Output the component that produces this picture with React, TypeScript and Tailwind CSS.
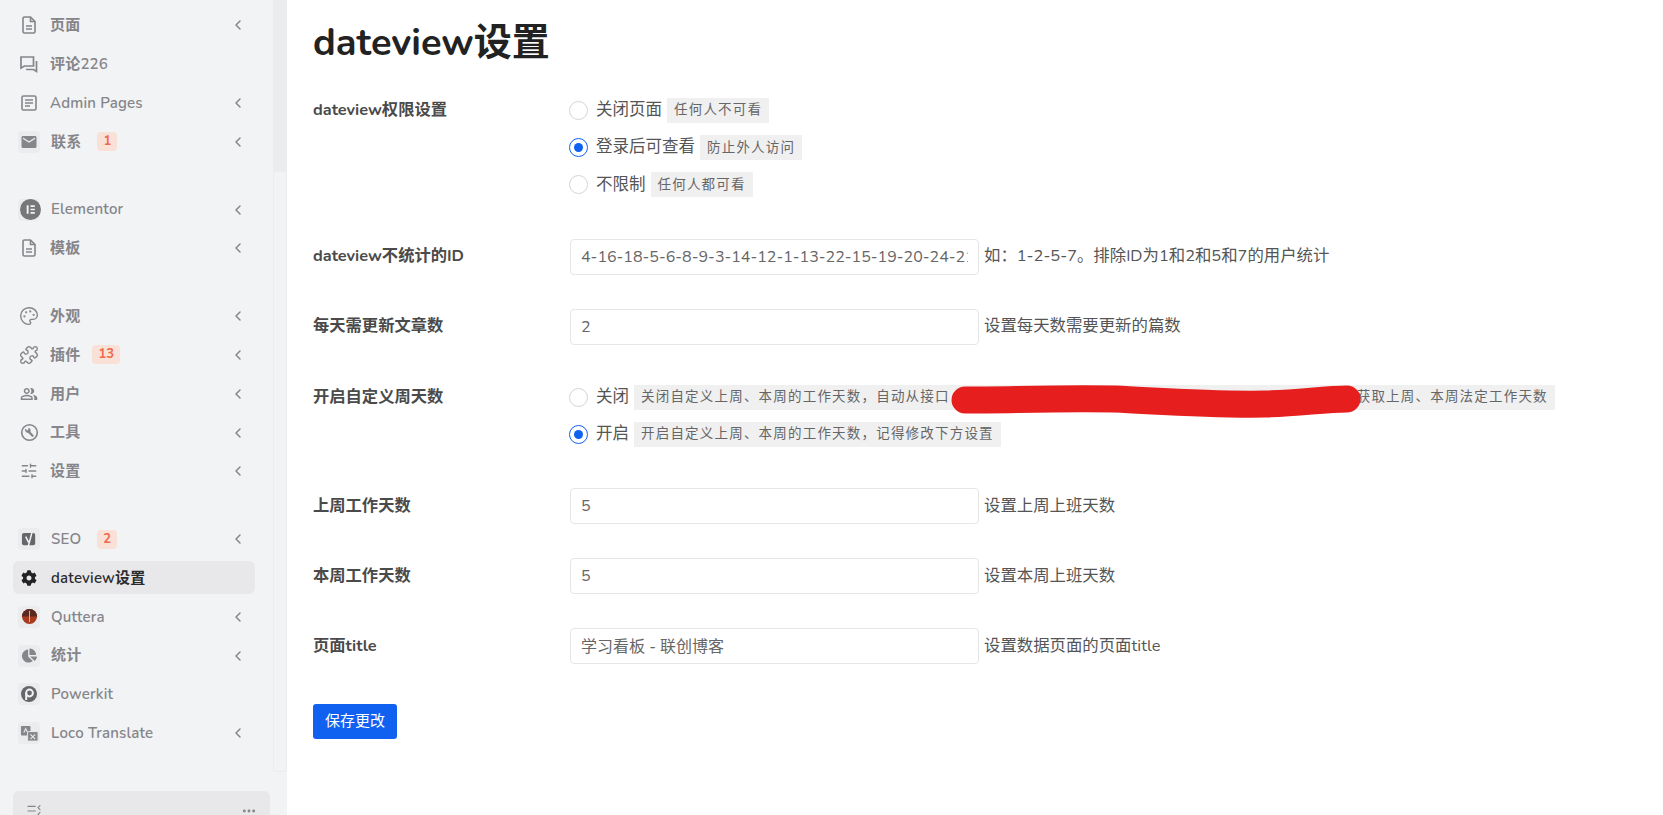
import { FC, ReactNode } from "react";
import {
  ChevronLeft,
  Ellipsis,
  ListCollapse,
  Palette,
  Puzzle,
  SlidersHorizontal,
} from "lucide-react";
import { FaChartPie, FaCog } from "react-icons/fa";
import { MdEmail, MdOutlinePeopleAlt } from "react-icons/md";

const sans = "font-['Nunito','Lato','Noto_Sans_CJK_SC',sans-serif]";

const FileIcon = () => (
  <svg viewBox="0 0 20 20" className="h-5 w-5" fill="none" stroke="currentColor" strokeWidth="1.6">
    <path d="M4 3.5A1.5 1.5 0 0 1 5.5 2H11.5L16 6.5V16.5A1.5 1.5 0 0 1 14.5 18H5.5A1.5 1.5 0 0 1 4 16.5z" />
    <path d="M11.5 2v4.5H16M7 11h6M7 14h6" />
  </svg>
);

const CommentsIcon = () => (
  <svg viewBox="0 0 20 20" className="h-5 w-5" fill="none" stroke="currentColor" strokeWidth="1.7">
    <path d="M2 3h12.5v9H5.5L2 14z" />
    <path d="M17.5 7v10.5L14.5 15.5H7" />
  </svg>
);

const PagesIcon = () => (
  <svg viewBox="0 0 20 20" className="h-5 w-5" fill="none" stroke="currentColor" strokeWidth="1.6">
    <rect x="3" y="3" width="14" height="14" rx="1.5" />
    <path d="M6 7h8M6 10h8M6 13h5" />
  </svg>
);

const ToolsIcon = () => (
  <svg viewBox="0 0 20 20" className="h-[19px] w-[19px]" fill="none" stroke="currentColor">
    <circle cx="10" cy="10" r="8.2" strokeWidth="1.7" />
    <path d="M9 9l4.2 4.4" strokeWidth="2.4" strokeLinecap="round" />
    <path d="M5.8 6.2a3 3 0 0 0 4.4 3.6a3 3 0 0 0-1-4.6l-.2 2.4l-1.8.4z" fill="currentColor" strokeWidth="0.6" />
  </svg>
);

const ElementorIcon = () => (
  <svg viewBox="0 0 22 22" className="ml-[3px] h-[21px] w-[21px] shrink-0">
    <circle cx="11" cy="11" r="11" fill="#77777a" />
    <path d="M7 6.5h2v9H7zM11 6.5h4.5v1.8H11zM11 10.1h4.5v1.8H11zM11 13.7h4.5v1.8H11z" fill="#f2f3f5" />
  </svg>
);

const YoastIcon = () => (
  <svg viewBox="0 0 18 18" className="h-[17px] w-[17px]">
    <rect x="1" y="2" width="14" height="13" rx="2" fill="#66666a" />
    <path d="M5 6l3 6M11.5 2L7.5 17" stroke="#f2f3f5" strokeWidth="1.6" fill="none" />
  </svg>
);

const QutteraIcon = () => (
  <svg viewBox="0 0 18 18" className="h-[17px] w-[17px]">
    <circle cx="9" cy="9" r="8" fill="#a83a20" />
    <path d="M1 9a8 8 0 0 1 16 0z" fill="#5a2a20" />
    <path d="M9 3v12" stroke="#e8b090" strokeWidth="1" />
  </svg>
);

const PowerkitIcon = () => (
  <svg viewBox="0 0 18 18" className="h-[18px] w-[18px]">
    <circle cx="9" cy="9" r="8" fill="#66666a" />
    <circle cx="9.5" cy="8" r="3.4" fill="none" stroke="#f2f3f5" strokeWidth="2" />
    <path d="M6.2 8v7" stroke="#f2f3f5" strokeWidth="2" />
  </svg>
);

const LocoIcon = () => (
  <svg viewBox="0 0 20 20" className="h-[19px] w-[19px]">
    <rect x="1" y="2" width="10" height="10" rx="1" fill="#85858a" />
    <rect x="8" y="8" width="11" height="10" rx="1" fill="#85858a" stroke="#ebecee" />
    <path d="M4 9l2-4 2 4M11 11l5 5M16 11l-5 5" stroke="#ebecee" strokeWidth="1.1" fill="none" />
  </svg>
);

type MenuItem = {
  label: string;
  icon: ReactNode;
  tile?: boolean;
  badge?: string;
  arrow?: boolean;
  active?: boolean;
};

const menuGroups: MenuItem[][] = [
  [
    { label: "页面", icon: <FileIcon />, arrow: true },
    { label: "评论226", icon: <CommentsIcon /> },
    { label: "Admin Pages", icon: <PagesIcon />, arrow: true },
    { label: "联系", icon: <MdEmail className="h-[18px] w-[18px]" />, tile: true, badge: "1", arrow: true },
  ],
  [
    { label: "Elementor", icon: <ElementorIcon />, tile: true, arrow: true },
    { label: "模板", icon: <FileIcon />, arrow: true },
  ],
  [
    { label: "外观", icon: <Palette className="h-5 w-5" strokeWidth={1.7} />, arrow: true },
    { label: "插件", icon: <Puzzle className="h-5 w-5" strokeWidth={1.7} />, badge: "13", arrow: true },
    { label: "用户", icon: <MdOutlinePeopleAlt className="h-[18px] w-[18px]" />, arrow: true },
    { label: "工具", icon: <ToolsIcon />, arrow: true },
    { label: "设置", icon: <SlidersHorizontal className="h-[18px] w-[18px]" strokeWidth={1.7} />, arrow: true },
  ],
  [
    { label: "SEO", icon: <YoastIcon />, tile: true, badge: "2", arrow: true },
    { label: "dateview设置", icon: <FaCog className="h-4 w-4" />, tile: true, active: true },
    { label: "Quttera", icon: <QutteraIcon />, tile: true, arrow: true },
    { label: "统计", icon: <FaChartPie className="h-[15px] w-[15px]" />, tile: true, arrow: true },
    { label: "Powerkit", icon: <PowerkitIcon />, tile: true },
    { label: "Loco Translate", icon: <LocoIcon />, tile: true, arrow: true },
  ],
];

const MenuRow: FC<{ item: MenuItem }> = ({ item }) => (
  <div className="flex h-[38.8px] items-center">
    <div
      className={`flex h-[33px] w-[242px] items-center rounded-md pl-[5px] pr-[9px] ${
        item.active ? "bg-[#e8e8ea] text-[#2b2b2e]" : "text-[#85858a]"
      }`}
    >
      <span
        className={`flex h-[22px] w-[22px] shrink-0 items-center justify-center rounded ${
          item.tile ? "bg-[#ebecee]" : ""
        } ${item.active ? "bg-transparent text-[#222]" : ""}`}
      >
        {item.icon}
      </span>
      <span
        className={`text-[15px] font-semibold tracking-[0.2px] ${item.tile ? "ml-[11px]" : "ml-[10px]"}`}
      >
        {item.label}
      </span>
      {item.badge && (
        <span
          className={`rounded bg-[#f9e1d8] px-[6px] text-[13px] font-bold leading-[19px] text-[#ef6a4c] ${
            item.tile ? "ml-[16px]" : "ml-[12px]"
          }`}
        >
          {item.badge}
        </span>
      )}
      {item.arrow && <ChevronLeft className="ml-auto h-4 w-4" strokeWidth={2.2} />}
    </div>
  </div>
);

const Sidebar: FC = () => (
  <aside className="relative flex h-full w-[287px] shrink-0 bg-[#f2f3f5]">
    <div className="w-[273px] shrink-0 pl-[13px] pt-[6px]">
      <div className="flex flex-col gap-[29px]">
        {menuGroups.map((group) => (
          <div key={group[0].label}>
            {group.map((item) => (
              <MenuRow key={item.label} item={item} />
            ))}
          </div>
        ))}
      </div>
      <div className="mt-[38px] flex h-[40px] w-[257px] items-start justify-between rounded-md bg-[#e8e8ea] px-[13px] pt-[12px] text-[#85858a]">
        <ListCollapse className="h-4 w-4 -scale-x-100" strokeWidth={1.7} />
        <Ellipsis className="h-4 w-4" strokeWidth={2.4} />
      </div>
    </div>
    <div className="h-[772px] w-[14px] overflow-hidden rounded-b border-x border-b border-[#ebecee]">
      <div className="h-[172px] bg-[#ebecee]" />
    </div>
  </aside>
);

const Hint: FC<{ children: ReactNode }> = ({ children }) => (
  <span className="ml-[5px] inline-flex h-[25px] items-center bg-[#f0f0f1] px-[7px] text-[13.5px] tracking-[1.2px] text-[#666]">
    {children}
  </span>
);

const Radio: FC<{ label: string; checked?: boolean; children: ReactNode }> = ({
  label,
  checked,
  children,
}) => (
  <div className="flex h-[37.2px] items-center whitespace-nowrap">
    <span
      className={`flex h-[19px] w-[19px] items-center justify-center rounded-full border bg-white ${
        checked ? "border-[#1061f0]" : "border-[#d5d5d8]"
      }`}
    >
      {checked && <span className="h-[9px] w-[9px] rounded-full bg-[#1061f0]" />}
    </span>
    <span className="ml-[8px] text-[16.5px] text-[#555]">{label}</span>
    <Hint>{children}</Hint>
  </div>
);

const TextRow: FC<{ label: string; value: string; help: string; className: string }> = ({
  label,
  value,
  help,
  className,
}) => (
  <div className={`flex items-center ${className}`}>
    <div className="w-[257px] shrink-0 text-[16.3px] font-bold text-[#4a4a4a]">{label}</div>
    <input
      readOnly
      value={value}
      className="h-[36px] w-[409px] shrink-0 rounded border border-[#e6e6e8] bg-white px-[10px] text-[16px] text-[#666] outline-none"
    />
    <span className="ml-[5px] whitespace-nowrap text-[16.4px] text-[#555]">{help}</span>
  </div>
);

const App: FC = () => (
  <div className={`flex h-[815px] overflow-hidden bg-white ${sans}`}>
    <Sidebar />
    <main className="min-w-0 flex-1 pl-[26px]">
      <h1 className="mt-[17px] text-[38px] font-bold leading-[52px] text-[#222]">dateview设置</h1>

      <div className="mt-[23px] flex">
        <div className="w-[256px] shrink-0 pt-[6px] text-[16.3px] font-bold leading-[24px] text-[#4a4a4a]">
          dateview权限设置
        </div>
        <div>
          <Radio label="关闭页面">任何人不可看</Radio>
          <Radio label="登录后可查看" checked>
            防止外人访问
          </Radio>
          <Radio label="不限制">任何人都可看</Radio>
        </div>
      </div>

      <TextRow
        className="mt-[35px]"
        label="dateview不统计的ID"
        value="4-16-18-5-6-8-9-3-14-12-1-13-22-15-19-20-24-21-7"
        help="如：1-2-5-7。排除ID为1和2和5和7的用户统计"
      />
      <TextRow className="mt-[34px]" label="每天需更新文章数" value="2" help="设置每天数需要更新的篇数" />

      <div className="relative mt-[34px] flex">
        <div className="w-[256px] shrink-0 pt-[6px] text-[16.3px] font-bold leading-[24px] text-[#4a4a4a]">
          开启自定义周天数
        </div>
        <div>
          <Radio label="关闭">
            关闭自定义上周、本周的工作天数，自动从接口
            <span className="inline-block w-[407px]" />
            获取上周、本周法定工作天数
          </Radio>
          <Radio label="开启" checked>
            开启自定义上周、本周的工作天数，记得修改下方设置
          </Radio>
        </div>
        <svg
          viewBox="0 0 420 40"
          className="absolute left-[632px] top-[2px] h-[40px] w-[420px]"
          fill="none"
        >
          <path
            d="M20 19 C65 19 110 17 170 18 C230 21 270 24 320 23 C355 22 380 18 402 18"
            stroke="#e61e1e"
            strokeWidth="27"
            strokeLinecap="round"
          />
        </svg>
      </div>

      <TextRow className="mt-[35px]" label="上周工作天数" value="5" help="设置上周上班天数" />
      <TextRow className="mt-[34px]" label="本周工作天数" value="5" help="设置本周上班天数" />
      <TextRow className="mt-[34px]" label="页面title" value="学习看板 - 联创博客" help="设置数据页面的页面title" />

      <button className="mt-[40px] h-[35px] w-[84px] rounded-[3px] bg-[#1061f0] text-[15px] text-white">
        保存更改
      </button>
    </main>
  </div>
);

export default App;
